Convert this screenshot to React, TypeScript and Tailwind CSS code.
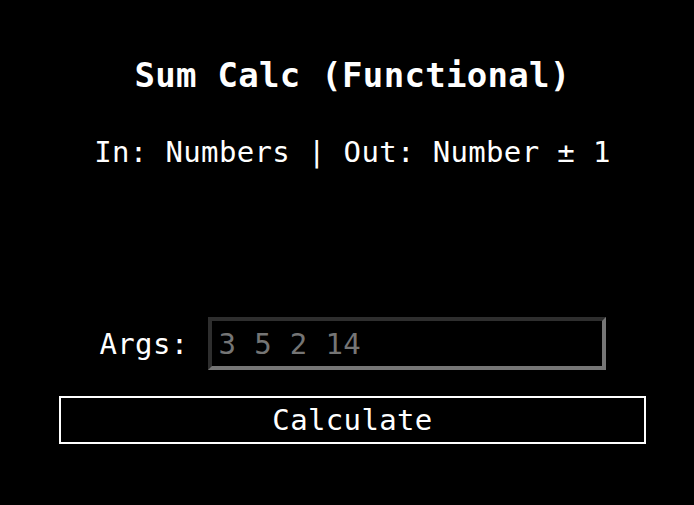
export default function App() {
  return (
    <div
      className="min-h-[505px] w-full bg-black text-white pl-[59px] pr-[48px] pt-[55px]"
      style={{ fontFamily: '"DejaVu Sans Mono", "Liberation Mono", monospace' }}
    >
      <div className="flex flex-col items-center">
        <h1 className="text-[34px] leading-[40px] font-bold tracking-[0.3px] text-center">
          Sum Calc (Functional)
        </h1>
        <p className="mt-[39px] text-[29px] leading-[36px] tracking-[0.35px] text-center">
          In: Numbers | Out: Number ± 1
        </p>
        <div className="mt-[147px] flex items-center gap-[19px]">
          <label className="text-[29px] leading-[36px] tracking-[0.35px]">Args:</label>
          <input
            type="text"
            placeholder="3 5 2 14"
            className="w-[398px] h-[53px] bg-black text-white text-[29px] tracking-[0.35px] pl-[7px] border-4 border-t-[#2e2e2e] border-l-[#2e2e2e] border-r-[#767676] border-b-[#767676] outline-none placeholder:text-[#757575]"
          />
        </div>
        <button className="mt-[26px] w-full h-[48px] border-2 border-white bg-black text-white text-[29px] leading-[40px] tracking-[0.35px]">
          Calculate
        </button>
      </div>
    </div>
  );
}
